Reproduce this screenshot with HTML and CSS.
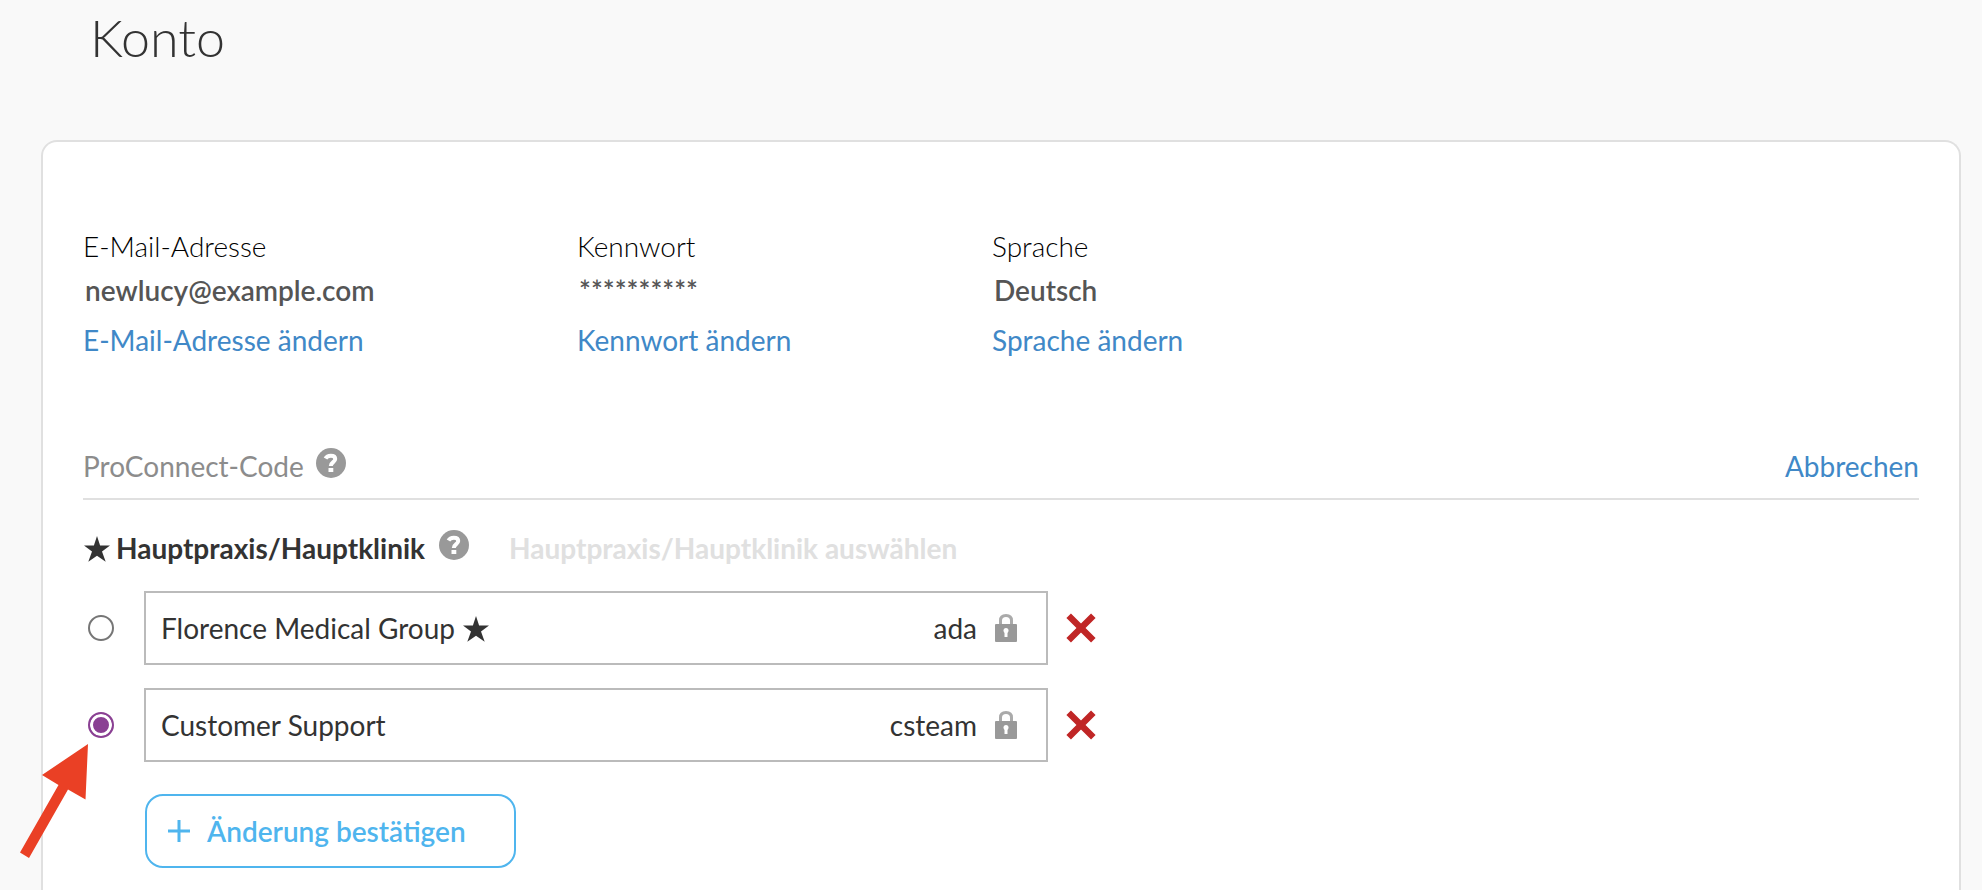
FILE: index.html
```html
<!DOCTYPE html>
<html lang="de">
<head>
    <meta charset="UTF-8">
    <meta name="viewport" content="width=device-width, initial-scale=1.0">
    <title>Konto</title>
    <link rel="stylesheet" href="styles.css">
</head>
<body>

    <!-- shared icons -->
    <svg class="icon-defs" aria-hidden="true">
        <symbol id="star" viewBox="0 0 26 26">
            <path d="M13 0l3.1 9.6H26l-8 6 3.7 10.1L13 19.7l-8.7 6L8 15.6l-8-6h9.9z"/>
        </symbol>
        <symbol id="help" viewBox="0 0 30 30">
            <circle cx="15" cy="15" r="15" fill="#999"/>
            <path d="M9.500 10.500C10.500 8.600 12.300 7.700 14.800 7.700c2.800 0 4.400 1.200 4.400 3.300 0 3.200-4.400 3-4.400 7" fill="none" stroke="#fff" stroke-width="4"/>
            <rect x="12.500" y="20" width="4.800" height="4" fill="#fff"/>
        </symbol>
        <symbol id="lock" viewBox="0 0 22 28">
            <path d="M5.500 12V6.500c0-3 1.800-5 5.500-5s5.500 2 5.500 5V12" fill="none" stroke="#aaa" stroke-width="3"/>
            <rect y="10" width="22" height="18" rx="1" fill="#999"/>
            <circle cx="11" cy="16.500" r="2.500" fill="#fff"/>
            <rect x="9.500" y="17" width="3" height="6" fill="#fff"/>
        </symbol>
        <symbol id="cross" viewBox="0 0 28 28">
            <path d="M2.500 2.500l23 23M25.500 2.500l-23 23" stroke="#c02626" stroke-width="6"/>
        </symbol>
    </svg>

    <h1>Konto</h1>

    <main class="card">
        <div class="account">
            <div class="field">
                <span class="label">E-Mail-Adresse</span>
                <span class="value">newlucy@example.com</span>
                <a href="#">E-Mail-Adresse ändern</a>
            </div>
            <div class="field">
                <span class="label">Kennwort</span>
                <span class="value">**********</span>
                <a href="#">Kennwort ändern</a>
            </div>
            <div class="field">
                <span class="label">Sprache</span>
                <span class="value">Deutsch</span>
                <a href="#">Sprache ändern</a>
            </div>
        </div>

        <div class="code-header">
            <h2>ProConnect-Code</h2>
            <button class="help" aria-label="Hilfe"><svg><use href="#help"/></svg></button>
            <a class="cancel" href="#">Abbrechen</a>
        </div>

        <div class="practice-header">
            <svg class="star"><use href="#star"/></svg>
            <h3>Hauptpraxis/Hauptklinik</h3>
            <button class="help" aria-label="Hilfe"><svg><use href="#help"/></svg></button>
            <button class="choose" disabled>Hauptpraxis/Hauptklinik auswählen</button>
        </div>

        <form class="practices">
            <div class="practice">
                <input type="radio" name="practice" id="practice-ada">
                <label class="box" for="practice-ada">
                    <span>Florence Medical Group</span>
                    <svg class="star"><use href="#star"/></svg>
                    <span class="code">ada</span>
                    <svg class="lock"><use href="#lock"/></svg>
                </label>
                <button type="button" class="remove" aria-label="Entfernen"><svg><use href="#cross"/></svg></button>
            </div>
            <div class="practice">
                <div class="marked">
                    <input type="radio" name="practice" id="practice-csteam" checked>
                    <svg class="arrow" viewBox="0 0 68 114"><path d="M68 0L22 31l16.500 10L0 108.500l9 5.500 39-68.500 17.500 10z" fill="#ea4025"/></svg>
                </div>
                <label class="box" for="practice-csteam">
                    <span>Customer Support</span>
                    <span class="code">csteam</span>
                    <svg class="lock"><use href="#lock"/></svg>
                </label>
                <button type="button" class="remove" aria-label="Entfernen"><svg><use href="#cross"/></svg></button>
            </div>
            <button type="button" class="confirm">
                <svg viewBox="0 0 22 22"><path d="M11 0v22M0 11h22" stroke="#4fb5ee" stroke-width="3"/></svg>
                Änderung bestätigen
            </button>
        </form>
    </main>

</body>
</html>
```
FILE: styles.css
```css
* {
    box-sizing: border-box;
}

body {
    margin: 0;
    min-height: 100vh;
    display: flex;
    flex-direction: column;
    background-color: #f9f9f9;
    color: #333;
    font-family: Lato, sans-serif;
    font-size: 28px;
    line-height: 34px;
}

h1, h2, h3 {
    margin: 0;
    font-size: 28px;
}

h1 {
    padding: 5px 90px 71px;
    font-size: 52px;
    font-weight: 300;
    line-height: 64px;
}

h2 {
    color: #8c8c8c;
    font-weight: 400;
}

a {
    color: #4088c7;
    text-decoration: none;
}

button {
    padding: 0;
    border: none;
    background: none;
    font: inherit;
    cursor: pointer;
}

svg {
    display: block;
}

.icon-defs {
    position: absolute;
    width: 0;
    height: 0;
}

.card {
    flex: 1;
    margin: 0 21px 0 41px;
    padding: 87px 40px 20px;
    background-color: #fff;
    border: 2px solid #e0e0e0;
    border-bottom: none;
    border-radius: 16px 16px 0 0;
}

.account {
    display: grid;
    grid-template-columns: 494px 415px 1fr;
}

.field {
    display: flex;
    flex-direction: column;
    align-items: flex-start;
}

.label {
    color: #000;
    font-weight: 300;
}

.value {
    padding: 10px 2px 16px;
    color: #555;
    font-weight: 600;
}

.code-header {
    display: flex;
    margin-top: 92px;
    padding-bottom: 15px;
    border-bottom: 2px solid #e0e0e0;
}

.cancel {
    margin-left: auto;
}

.practice-header {
    display: flex;
    margin-top: 31px;
    margin-bottom: 26px;
}

.star {
    width: 26px;
    height: 26px;
    margin-top: 2px;
    fill: #333;
}

.practice-header .star {
    margin: 5px 6px 0 1px;
}

.help {
    height: 30px;
    margin-top: -1px;
    margin-left: 12px;
}

.practice-header .help {
    margin-left: 14px;
}

.help svg {
    width: 30px;
    height: 30px;
}

.choose {
    margin-left: 40px;
    color: #e0e0e0;
    font-weight: 700;
    cursor: default;
}

.practice {
    display: flex;
    align-items: center;
    margin-bottom: 23px;
}

input[type="radio"] {
    appearance: none;
    display: block;
    width: 26px;
    height: 26px;
    margin: 0 30px 0 5px;
    border: 2px solid #767676;
    border-radius: 50%;
}

input[type="radio"]:checked {
    border-color: #8a4093;
    background: #8a4093;
    box-shadow: inset 0 0 0 3px #fff;
}

.box {
    display: flex;
    align-items: center;
    gap: 8px;
    width: 904px;
    height: 74px;
    padding: 0 29px 0 15px;
    border: 2px solid #bbb;
}

.code {
    margin-left: auto;
}

.lock {
    width: 22px;
    height: 28px;
    margin-left: 10px;
}

.remove {
    margin-left: 18px;
}

.remove svg {
    width: 30px;
    height: 30px;
}

/* pointer to the selected practice */
.marked {
    position: relative;
}

.arrow {
    position: absolute;
    top: 32px;
    right: 56px;
    width: 68px;
    height: 114px;
    pointer-events: none;
}

.confirm {
    display: flex;
    align-items: center;
    gap: 17px;
    height: 74px;
    margin-top: 32px;
    margin-left: 62px;
    padding: 0 48px 0 21px;
    border: 2px solid #4fb5ee;
    border-radius: 18px;
    color: #4fb5ee;
    font-weight: 600;
}

.confirm svg {
    width: 22px;
    height: 22px;
}
```
